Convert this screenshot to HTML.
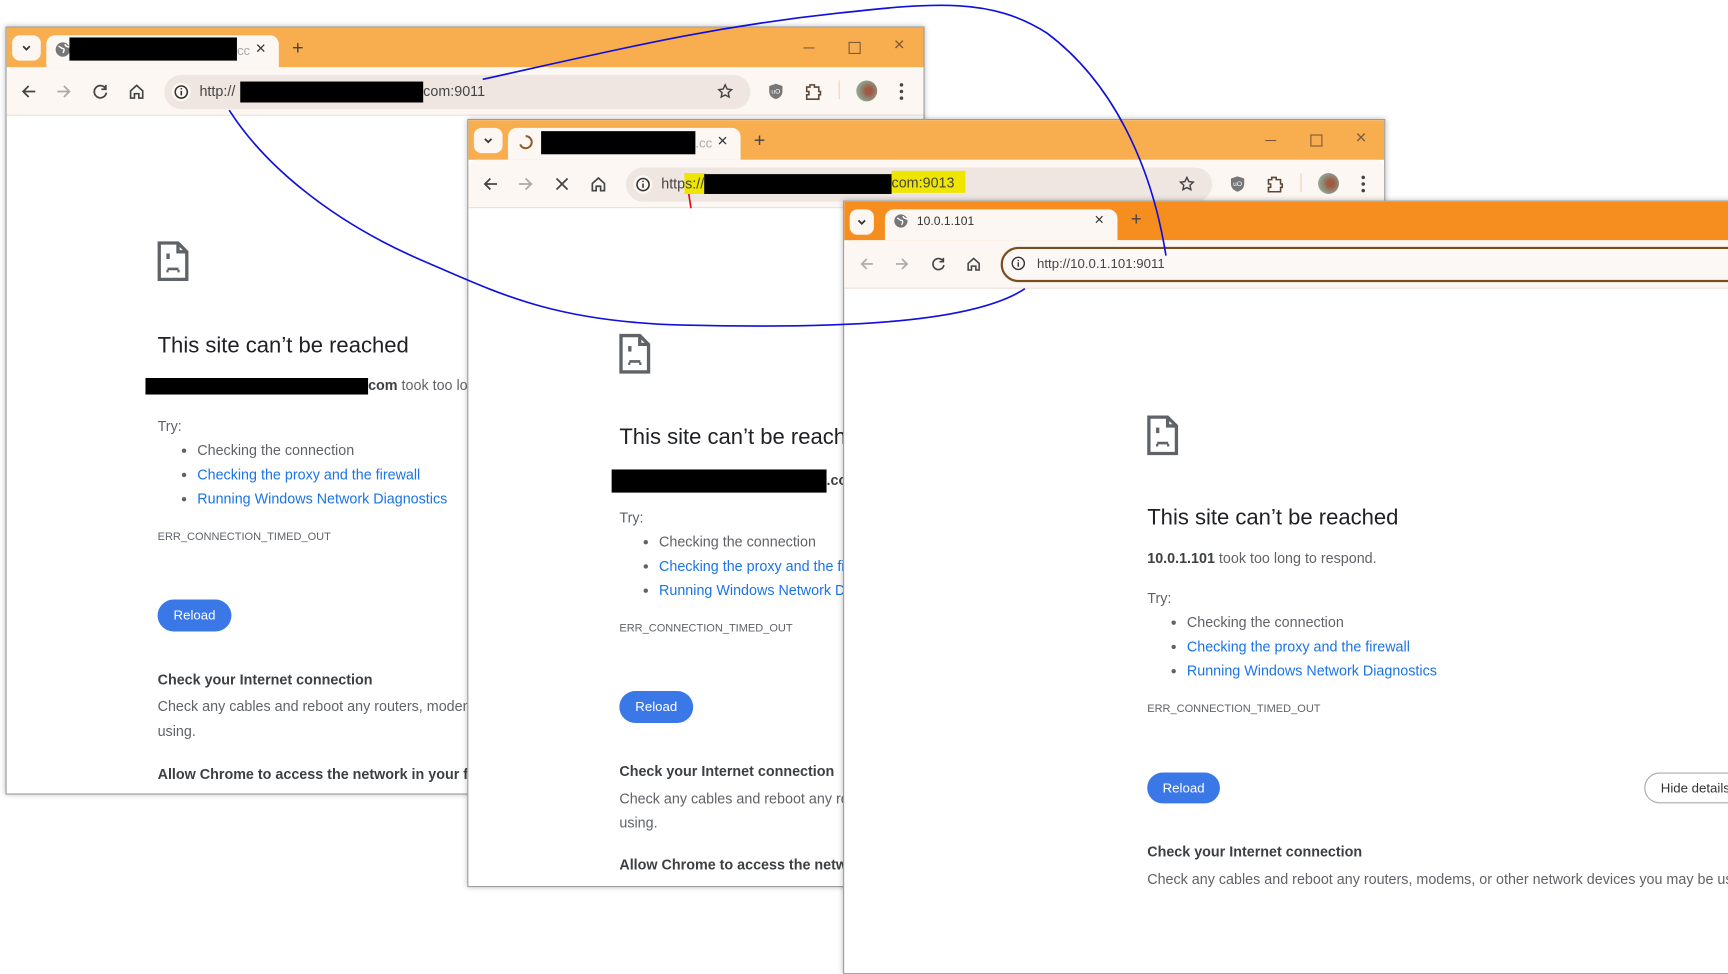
<!DOCTYPE html>
<html><head><meta charset="utf-8">
<style>
html,body{margin:0;padding:0;width:1728px;height:888px;overflow:hidden;background:#fff}
#root{position:absolute;left:0;top:0;width:1568px;height:806px;transform:scale(1.10204);transform-origin:0 0;font-family:"Liberation Sans",sans-serif}
.win{position:absolute;background:#fff;border:1px solid #9a9a9a;overflow:hidden;box-shadow:0 0 5px rgba(0,0,0,.28)}
.ts{position:absolute;left:0;top:0;right:0;height:36px}
.dd{position:absolute;left:5px;top:7px;width:26px;height:23px;background:#fcf7f3;border-radius:7px}
.tab{position:absolute;left:36px;top:7px;width:211px;height:29px;background:#fcf7f3;border-radius:8px 8px 0 0}
.tb{position:absolute;left:0;top:36px;right:0;height:43px;background:#fcf7f3;border-bottom:1px solid #ead9cf;border-radius:8px 8px 0 0}
.omni{position:absolute;top:7px;height:31px;border-radius:16px;background:#efe6e1}
.t{position:absolute;white-space:nowrap;line-height:20px;font-size:13px;color:#5f6368}
.h{font-size:20px;color:#202124;line-height:26px}
.lnk{color:#1a73e8}
.bul{position:absolute;width:4px;height:4px;border-radius:2px;background:#5f6368}
.err{font-size:10px;color:#5f6368}
.rl{position:absolute;width:67px;height:29px;border-radius:15px;background:#3b78e7;color:#fff;font-size:12px;text-align:center;line-height:29px}
.b{font-weight:bold;color:#3c4043}
.blk{position:absolute;background:#000}
svg{position:absolute;overflow:visible}
</style></head><body><div id="root">

<!-- WINDOW 1 -->
<div class="win" style="left:5px;top:24px;width:832px;height:695px">
 <div class="ts" style="background:#f8ae4f"></div>
 <div class="dd"></div>
 <svg style="left:13px;top:14px" width="10" height="10"><path d="M2 3l3 3 3-3" fill="none" stroke="#333" stroke-width="1.6"/></svg>
 <div class="tab"></div>
 <svg style="left:44px;top:13px" width="14" height="14"><circle cx="7" cy="7" r="6.5" fill="#777"/><path d="M3 4c2 0 2 2 4 2s1 3 0 4M9 2c0 2 2 2 4 3" stroke="#fff" fill="none" stroke-width="1.3"/></svg>
 <div class="blk" style="left:57px;top:9px;width:152px;height:21px"></div>
 <div class="t" style="left:209px;top:11px;font-size:12px;color:#aaa">cc</div>
 <div class="t" style="left:226px;top:10px;font-size:16px;color:#333">×</div>
 <div class="t" style="left:259px;top:8px;font-size:18px;color:#444">+</div>
 <div style="position:absolute;left:723px;top:18px;width:10px;height:1px;background:#7a5a3a"></div>
 <div style="position:absolute;left:764px;top:13px;width:9px;height:9px;border:1px solid #7a5a3a"></div>
 <div class="t" style="left:805px;top:6px;font-size:17px;color:#7a5a3a">×</div>
 <div class="tb">
  <svg style="left:13px;top:15px" width="14" height="14"><path d="M13 7H2M7 2L2 7l5 5" fill="none" stroke="#444" stroke-width="1.6"/></svg>
  <svg style="left:45px;top:15px" width="14" height="14"><path d="M1 7h11M7 2l5 5-5 5" fill="none" stroke="#aaa" stroke-width="1.6"/></svg>
  <svg style="left:78px;top:15px" width="14" height="14"><path d="M11.5 4A5.5 5.5 0 1 0 12.5 8M12 1v4H8" fill="none" stroke="#444" stroke-width="1.6"/></svg>
  <svg style="left:111px;top:15px" width="14" height="14"><path d="M1.5 6.5L7 1.5l5.5 5V13H9V9H5v4H1.5z" fill="none" stroke="#444" stroke-width="1.5"/></svg>
  <div class="omni" style="left:143px;width:532px"></div>
  <svg style="left:150px;top:14px" width="17" height="17"><circle cx="8.5" cy="8.5" r="8.5" fill="#fcf7f3"/><circle cx="8.5" cy="8.5" r="5.5" fill="none" stroke="#333" stroke-width="1.4"/><path d="M8.5 7.5v4M8.5 5v1.2" stroke="#333" stroke-width="1.4"/></svg>
  <div class="t" style="left:175px;top:12px;color:#444">http://</div>
  <div class="blk" style="left:212px;top:13px;width:166px;height:19px"></div>
  <div class="t" style="left:378px;top:12px;color:#444">com:9011</div>
  <svg style="left:645px;top:15px" width="14" height="14"><path d="M7 1l1.8 3.8 4 .5-3 2.8.8 4L7 10.2 3.4 12.1l.8-4-3-2.8 4-.5z" fill="none" stroke="#444" stroke-width="1.3"/></svg>
  <svg style="left:691px;top:14px" width="14" height="16"><path d="M7 1l6 2v5c0 4-3 6-6 7-3-1-6-3-6-7V3z" fill="#777"/><text x="3" y="10" font-size="6" fill="#fff" font-family="Liberation Sans">uO</text></svg>
  <svg style="left:724px;top:14px" width="16" height="16"><path d="M2 4h3V2h4v2h4v4h1.5v3H13v4H2v-4h2V8H2z" fill="none" stroke="#5a4634" stroke-width="1.4"/></svg>
  <div style="position:absolute;left:755px;top:12px;width:1px;height:17px;background:#f2d0bb"></div>
  <div style="position:absolute;left:771px;top:12px;width:19px;height:19px;border-radius:50%;background:radial-gradient(circle at 60% 50%,#a05a44 20%,#8a9a88 60%,#c2b598)"></div>
  <svg style="left:810px;top:14px" width="4" height="16"><circle cx="2" cy="2" r="1.6" fill="#444"/><circle cx="2" cy="8" r="1.6" fill="#444"/><circle cx="2" cy="14" r="1.6" fill="#444"/></svg>
 </div>
 <svg style="left:137px;top:194px" width="28" height="36"><path d="M1.5 1.5h17l8 8v25h-25z M18.5 1.5v8h8" fill="none" stroke="#5f6368" stroke-width="3"/><rect x="8" y="11" width="3" height="5" fill="#5f6368"/><path d="M9 25h10M8 27h2M18 27h2" stroke="#5f6368" stroke-width="2.4"/></svg>
 <div class="t h" style="left:137px;top:276px">This site can’t be reached</div>
 <div class="blk" style="left:126px;top:318px;width:202px;height:15px"></div>
 <div class="t" style="left:328px;top:315px"><span class="b">com</span> took too long to respond.</div>
 <div class="t" style="left:137px;top:352px">Try:</div>
 <div class="bul" style="left:159px;top:382px"></div><div class="t" style="left:173px;top:374px">Checking the connection</div>
 <div class="bul" style="left:159px;top:404px"></div><div class="t lnk" style="left:173px;top:396px">Checking the proxy and the firewall</div>
 <div class="bul" style="left:159px;top:426px"></div><div class="t lnk" style="left:173px;top:418px">Running Windows Network Diagnostics</div>
 <div class="t err" style="left:137px;top:453px">ERR_CONNECTION_TIMED_OUT</div>
 <div class="rl" style="left:137px;top:519px">Reload</div>
 <div class="t b" style="left:137px;top:582px">Check your Internet connection</div>
 <div class="t" style="left:137px;top:606px">Check any cables and reboot any routers, modems, or other network devices you may be</div>
 <div class="t" style="left:137px;top:629px">using.</div>
 <div class="t b" style="left:137px;top:668px">Allow Chrome to access the network in your firewall or antivirus settings.</div>
</div>

<!-- WINDOW 2 -->
<div class="win" style="left:424px;top:108px;width:831px;height:695px">
 <div class="ts" style="background:#f8ae4f"></div>
 <div class="dd"></div>
 <svg style="left:13px;top:14px" width="10" height="10"><path d="M2 3l3 3 3-3" fill="none" stroke="#333" stroke-width="1.6"/></svg>
 <div class="tab"></div>
 <svg style="left:45px;top:13px" width="14" height="14"><path d="M7 1.5A5.5 5.5 0 0 1 7 12.5 5.5 5.5 0 0 1 2 9" fill="none" stroke="#8a5a2a" stroke-width="1.8"/></svg>
 <div class="blk" style="left:66px;top:10px;width:140px;height:21px"></div>
 <div class="t" style="left:206px;top:11px;font-size:12px;color:#aaa">.cc</div>
 <div class="t" style="left:226px;top:10px;font-size:16px;color:#333">×</div>
 <div class="t" style="left:259px;top:8px;font-size:18px;color:#444">+</div>
 <div style="position:absolute;left:723px;top:18px;width:10px;height:1px;background:#7a5a3a"></div>
 <div style="position:absolute;left:764px;top:13px;width:9px;height:9px;border:1px solid #7a5a3a"></div>
 <div class="t" style="left:805px;top:6px;font-size:17px;color:#7a5a3a">×</div>
 <div class="tb">
  <svg style="left:13px;top:15px" width="14" height="14"><path d="M13 7H2M7 2L2 7l5 5" fill="none" stroke="#444" stroke-width="1.6"/></svg>
  <svg style="left:45px;top:15px" width="14" height="14"><path d="M1 7h11M7 2l5 5-5 5" fill="none" stroke="#aaa" stroke-width="1.6"/></svg>
  <svg style="left:79px;top:16px" width="12" height="12"><path d="M1 1l10 10M11 1L1 11" stroke="#444" stroke-width="1.6"/></svg>
  <svg style="left:111px;top:15px" width="14" height="14"><path d="M1.5 6.5L7 1.5l5.5 5V13H9V9H5v4H1.5z" fill="none" stroke="#444" stroke-width="1.5"/></svg>
  <div class="omni" style="left:143px;width:532px"></div>
  <svg style="left:150px;top:14px" width="17" height="17"><circle cx="8.5" cy="8.5" r="8.5" fill="#fcf7f3"/><circle cx="8.5" cy="8.5" r="5.5" fill="none" stroke="#333" stroke-width="1.4"/><path d="M8.5 7.5v4M8.5 5v1.2" stroke="#333" stroke-width="1.4"/></svg>
  <div style="position:absolute;left:196px;top:12px;width:20px;height:19px;background:#eee600"></div>
  <div style="position:absolute;left:384px;top:10px;width:67px;height:20px;background:#eee600"></div>
  <div class="t" style="left:175px;top:12px;color:#444">https://</div>
  <div class="blk" style="left:214px;top:13px;width:170px;height:18px"></div>
  <div class="t" style="left:384px;top:11px;color:#444">com:9013</div>
  <svg style="left:645px;top:15px" width="14" height="14"><path d="M7 1l1.8 3.8 4 .5-3 2.8.8 4L7 10.2 3.4 12.1l.8-4-3-2.8 4-.5z" fill="none" stroke="#444" stroke-width="1.3"/></svg>
  <svg style="left:691px;top:14px" width="14" height="16"><path d="M7 1l6 2v5c0 4-3 6-6 7-3-1-6-3-6-7V3z" fill="#777"/><text x="3" y="10" font-size="6" fill="#fff" font-family="Liberation Sans">uO</text></svg>
  <svg style="left:724px;top:14px" width="16" height="16"><path d="M2 4h3V2h4v2h4v4h1.5v3H13v4H2v-4h2V8H2z" fill="none" stroke="#5a4634" stroke-width="1.4"/></svg>
  <div style="position:absolute;left:755px;top:12px;width:1px;height:17px;background:#f2d0bb"></div>
  <div style="position:absolute;left:771px;top:12px;width:19px;height:19px;border-radius:50%;background:radial-gradient(circle at 60% 50%,#a05a44 20%,#8a9a88 60%,#c2b598)"></div>
  <svg style="left:810px;top:14px" width="4" height="16"><circle cx="2" cy="2" r="1.6" fill="#444"/><circle cx="2" cy="8" r="1.6" fill="#444"/><circle cx="2" cy="14" r="1.6" fill="#444"/></svg>
 </div>
 <svg style="left:137px;top:194px" width="28" height="36"><path d="M1.5 1.5h17l8 8v25h-25z M18.5 1.5v8h8" fill="none" stroke="#5f6368" stroke-width="3"/><rect x="8" y="11" width="3" height="5" fill="#5f6368"/><path d="M9 25h10M8 27h2M18 27h2" stroke="#5f6368" stroke-width="2.4"/></svg>
 <div class="t h" style="left:137px;top:275px">This site can’t be reached</div>
 <div class="blk" style="left:130px;top:317px;width:195px;height:21px"></div>
 <div class="t" style="left:325px;top:317px"><span class="b">.com</span> took too long to respond.</div>
 <div class="t" style="left:137px;top:351px">Try:</div>
 <div class="bul" style="left:159px;top:381px"></div><div class="t" style="left:173px;top:373px">Checking the connection</div>
 <div class="bul" style="left:159px;top:403px"></div><div class="t lnk" style="left:173px;top:395px">Checking the proxy and the firewall</div>
 <div class="bul" style="left:159px;top:425px"></div><div class="t lnk" style="left:173px;top:417px">Running Windows Network Diagnostics</div>
 <div class="t err" style="left:137px;top:452px">ERR_CONNECTION_TIMED_OUT</div>
 <div class="rl" style="left:137px;top:518px">Reload</div>
 <div class="t b" style="left:137px;top:581px">Check your Internet connection</div>
 <div class="t" style="left:137px;top:606px">Check any cables and reboot any routers, modems, or other network devices you may be</div>
 <div class="t" style="left:137px;top:628px">using.</div>
 <div class="t b" style="left:137px;top:666px">Allow Chrome to access the network in your firewall or antivirus settings.</div>
</div>

<!-- WINDOW 3 -->
<div class="win" style="left:765px;top:182px;width:900px;height:700px">
 <div class="ts" style="background:#f68e1f;height:35px"></div>
 <div class="dd" style="width:22px"></div>
 <svg style="left:11px;top:14px" width="10" height="10"><path d="M2 3l3 3 3-3" fill="none" stroke="#333" stroke-width="1.6"/></svg>
 <div class="tab" style="left:37px;height:28px"></div>
 <svg style="left:45px;top:11px" width="13" height="13"><circle cx="6.5" cy="6.5" r="6" fill="#777"/><path d="M3 4c2 0 2 2 4 2s1 3 0 4M8.5 2c0 2 2 2 4 3" stroke="#fff" fill="none" stroke-width="1.2"/></svg>
 <div class="t" style="left:66px;top:8px;font-size:11px;color:#333">10.0.1.101</div>
 <div class="t" style="left:227px;top:7px;font-size:15px;color:#333">×</div>
 <div class="t" style="left:260px;top:6px;font-size:17px;color:#444">+</div>
 <div class="tb" style="top:35px">
  <svg style="left:14px;top:15px" width="13" height="13"><path d="M12 6.5H2M6.5 2L2 6.5l4.5 4.5" fill="none" stroke="#aaa" stroke-width="1.5"/></svg>
  <svg style="left:46px;top:15px" width="13" height="13"><path d="M1 6.5h10M6.5 2L11 6.5 6.5 11" fill="none" stroke="#aaa" stroke-width="1.5"/></svg>
  <svg style="left:79px;top:15px" width="13" height="13"><path d="M10.5 3.5A5 5 0 1 0 11.5 7.5M11 1v3.5H7.5" fill="none" stroke="#444" stroke-width="1.5"/></svg>
  <svg style="left:111px;top:15px" width="13" height="13"><path d="M1.5 6L6.5 1.5 11.5 6V12H8.5V8.5h-4V12h-3z" fill="none" stroke="#444" stroke-width="1.4"/></svg>
  <div class="omni" style="left:142px;width:820px;top:6px;height:28px;background:#fcf8f5;border:2px solid #7a4d1f"></div>
  <svg style="left:151px;top:14px" width="14" height="14"><circle cx="7" cy="7" r="5.5" fill="none" stroke="#333" stroke-width="1.3"/><path d="M7 6v4M7 3.8v1.2" stroke="#333" stroke-width="1.3"/></svg>
  <div class="t" style="left:175px;top:11px;color:#444;font-size:12px">http://10.0.1.101:9011</div>
 </div>
 <svg style="left:275px;top:194px" width="28" height="36"><path d="M1.5 1.5h17l8 8v25h-25z M18.5 1.5v8h8" fill="none" stroke="#5f6368" stroke-width="3"/><rect x="8" y="11" width="3" height="5" fill="#5f6368"/><path d="M9 25h10M8 27h2M18 27h2" stroke="#5f6368" stroke-width="2.4"/></svg>
 <div class="t h" style="left:275px;top:274px">This site can’t be reached</div>
 <div class="t" style="left:275px;top:314px"><span class="b">10.0.1.101</span> took too long to respond.</div>
 <div class="t" style="left:275px;top:350px">Try:</div>
 <div class="bul" style="left:297px;top:380px"></div><div class="t" style="left:311px;top:372px">Checking the connection</div>
 <div class="bul" style="left:297px;top:402px"></div><div class="t lnk" style="left:311px;top:394px">Checking the proxy and the firewall</div>
 <div class="bul" style="left:297px;top:424px"></div><div class="t lnk" style="left:311px;top:416px">Running Windows Network Diagnostics</div>
 <div class="t err" style="left:275px;top:451px">ERR_CONNECTION_TIMED_OUT</div>
 <div class="rl" style="left:275px;top:518px;height:28px;line-height:28px;width:66px">Reload</div>
 <div style="position:absolute;left:726px;top:518px;width:100px;height:28px;border:1px solid #aaa;border-radius:15px;box-sizing:border-box"></div>
 <div class="t" style="left:741px;top:522px;font-size:12px;color:#333">Hide details</div>
 <div class="t b" style="left:275px;top:580px">Check your Internet connection</div>
 <div class="t" style="left:275px;top:605px">Check any cables and reboot any routers, modems, or other network devices you may be using.</div>
</div>

<!-- annotations -->
<svg style="left:0;top:0" width="1568" height="806">
 <path d="M438 72 C560 45 640 25 760 12 C850 2 900 -2 950 30 C1010 75 1045 150 1058 232" fill="none" stroke="#1010dd" stroke-width="1.5"/>
 <path d="M208 100 C240 150 300 200 380 235 C450 265 500 292 620 295 C750 298 880 295 930 262" fill="none" stroke="#1010dd" stroke-width="1.5"/>
 <path d="M625 176 L627 189" stroke="#e01010" stroke-width="1.5"/>
</svg>
</div></body></html>
